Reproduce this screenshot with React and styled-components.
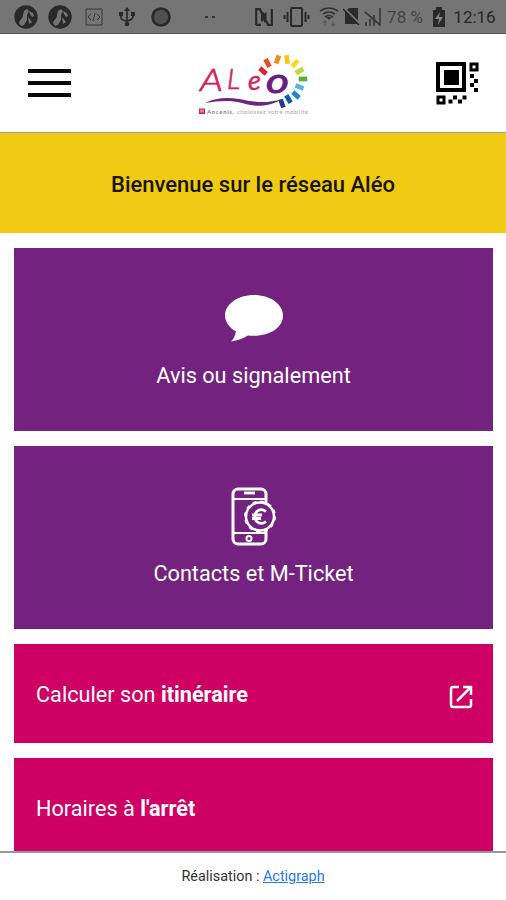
import React from "react";
import styled, { createGlobalStyle } from "styled-components";

const rays = [
  { x: 73, y: 25, angle: -48, color: "#d9232e" },
  { x: 77.5, y: 17, angle: -28, color: "#ea4b20" },
  { x: 87.5, y: 13.5, angle: 20, color: "#f58a1f" },
  { x: 97, y: 13.5, angle: -8, color: "#f9c51a" },
  { x: 105, y: 17.5, angle: 43, color: "#f3dc24" },
  { x: 109.5, y: 25, angle: 60, color: "#c3d72e" },
  { x: 113, y: 33, angle: 88, color: "#55b13c" },
  { x: 109.5, y: 41, angle: 112, color: "#55b5e5" },
  { x: 106, y: 49, angle: 132, color: "#168bd0" },
  { x: 98.5, y: 53, angle: 150, color: "#135bae" },
  { x: 92, y: 57.5, angle: 160, color: "#263b91" },
];

const AppIcon = () => (
  <svg width="24" height="24" viewBox="0 0 24 24">
    <circle cx="12" cy="12" r="11.7" fill="#292929" />
    <path
      d="M5 18c1-4 4-4 4-8l1-4 3-2 2 2-2 4v5l-3 5-3 1zM15 6l4 2 1 3-2 1-2-3zM14 12l4 5-3 2z"
      fill="#747474"
    />
  </svg>
);

const Logo = () => (
  <LogoSvg width="130" height="75" viewBox="0 0 130 75">
    <g fontFamily="Lato, sans-serif" fill="#d71e5c" stroke="#d71e5c" strokeWidth=".3">
      <text x="10" y="45" fontSize="31" fontStyle="italic" fontWeight="300" strokeWidth=".7" textLength="23" lengthAdjust="spacingAndGlyphs">
        A
      </text>
      <text x="37" y="43" fontSize="28" fontStyle="italic" fontWeight="300" strokeWidth=".7">
        L
      </text>
      <text x="58" y="44" fontSize="27" fontStyle="italic" strokeWidth=".4">
        e
      </text>
      <text x="76" y="47" fontSize="34" fontStyle="italic" textLength="23" lengthAdjust="spacingAndGlyphs" fill="#6b1e80" stroke="#6b1e80" strokeWidth=".9">
        o
      </text>
    </g>
    <path
      d="M15 57c10-5 21-6 34-4 15 3 27 5 43 0-11 7-24 9-40 4-13-3-23-2-37 0z"
      fill="#6b2685"
    />
    {rays.map((ray) => (
      <rect
        key={ray.color}
        x="-2.4"
        y="-4.3"
        width="4.8"
        height="8.6"
        fill={ray.color}
        transform={`translate(${ray.x} ${ray.y}) rotate(${ray.angle})`}
      />
    ))}
    <rect x="9" y="62.5" width="6" height="5.5" fill="#d71e5c" />
    <path d="M11 63.5v3m2-3v3" stroke="#fff" strokeWidth=".8" />
    <text x="17" y="67.5" fontFamily="Lato, sans-serif" fontSize="6" fontWeight="700" fill="#9c7890" textLength="27">
      Ancenis,
    </text>
    <text x="47" y="67.5" fontFamily="Lato, sans-serif" fontSize="6" fill="#b6a1b2" textLength="71">
      choisissez votre mobilité
    </text>
  </LogoSvg>
);

const QrIcon = () => (
  <svg width="43" height="43" viewBox="0 0 43 43">
    <g fill="none" stroke="#000">
      <path d="M2 2h26v26H2z" strokeWidth="4" />
      <path d="M35 2h6v6h-6zM2 35h6v6H2z" strokeWidth="3" />
    </g>
    <path
      d="M8 8h15v15H8zM34 12h4v4h-4zM38 17h4v4h-4zM34 21h4v4h-4zM38 26h4v4h-4zM12.5 37.5h4v4h-4zM17 33.5h4v4h-4zM22 37.5h4v4h-4zM26.5 33.5h4v4h-4z"
      fill="#000"
    />
  </svg>
);

const PhoneIcon = () => (
  <svg width="46" height="59" viewBox="0 0 46 59" fill="none" stroke="#fff">
    <rect x="2" y="2" width="33" height="55" rx="5" strokeWidth="3" />
    <path d="M3 12h32M3 46h32" strokeWidth="2" />
    <path d="M13 6h11" strokeWidth="2.8" />
    <circle cx="18" cy="51.5" r="2.5" strokeWidth="2" />
    <circle cx="29" cy="29.5" r="14" fill="#73237f" strokeWidth="2.5" />
    <circle cx="29" cy="29.5" r="15" strokeWidth="2" strokeDasharray="3.9 3.95" />
    <path d="M35 24.5c-5-4-11-1-11 5s6 9 11 5M21 28h10m-10 3.5h9" strokeWidth="2.8" />
  </svg>
);

const App = () => {
  return (
    <Page>
      <GlobalStyle />
      <StatusBar>
        <Slot $w={24}>
          <AppIcon />
        </Slot>
        <Slot $w={24} $gap={10}>
          <AppIcon />
        </Slot>
        <Slot $w={18} $gap={13}>
          <svg width="18" height="18" viewBox="0 0 18 18" fill="none" stroke="#383838">
            <path d="M1 1h16v16H1z" />
            <path d="m6 6-3 3 3 3m6-6 3 3-3 3m-2-7-2 8" />
          </svg>
        </Slot>
        <Slot $w={16} $gap={16}>
          <svg width="16" height="20" viewBox="0 0 16 20" fill="none" stroke="#292929" strokeWidth="1.6">
            <path d="M8 2v15M2 7v4q0 2 6 3 6-1 6-5V6" />
            <path d="m8 0-3 4h6zM0 5h4v4H0zM12 5h4v4h-4z" fill="#292929" stroke="none" />
            <circle cx="8" cy="17" r="2.3" fill="#292929" stroke="none" />
          </svg>
        </Slot>
        <Slot $w={20} $gap={16}>
          <svg width="20" height="20" viewBox="0 0 20 20">
            <circle cx="10" cy="10" r="8.5" fill="#505050" stroke="#292929" strokeWidth="2.6" />
          </svg>
        </Slot>
        <Slot $w={12} $gap={33}>
          <svg width="12" height="4" viewBox="0 0 12 4" fill="#343434">
            <path d="M1 1h3v2H1zM8 1h3v2H8z" />
          </svg>
        </Slot>
        <Slot $w={18} $gap={39}>
          <svg width="18" height="18" viewBox="0 0 18 18" fill="none" stroke="#292929" strokeWidth="2.2">
            <path d="M1.2 17V1.2H5L10.500 14V4.500M16.800 1v15.800H13L7 4v9.500M1.200 16.800H6" />
          </svg>
        </Slot>
        <Slot $w={27} $gap={10}>
          <svg width="27" height="20" viewBox="0 0 27 20" fill="none" stroke="#292929" strokeWidth="2">
            <rect x="8" y="1" width="11" height="18" rx="1" />
            <path d="M4.5 5v10M1.5 8v4M22.5 5v10M25.5 8v4" />
          </svg>
        </Slot>
        <Slot $w={20} $gap={9}>
          <svg width="20" height="20" viewBox="0 0 20 20" fill="none" stroke="#303030" strokeWidth="1.7">
            <path d="M1 4q9-6 18 0M4 7q6-4 12 0M6 10q4-3 8 0" />
            <path d="m7 10 3 3 3-3z" fill="#303030" stroke="none" />
            <path d="M6 14v5m-2-3 2-2 2 2M14 14v5m-2-2 2 2 2-2" stroke="#5b5b5b" strokeWidth="1.3" />
          </svg>
        </Slot>
        <Slot $w={17} $gap={4}>
          <svg width="17" height="19" viewBox="0 0 17 19">
            <path d="M6 1h9v16H2V5z" fill="#292929" />
            <path d="m1 1 16 16" stroke="#757575" strokeWidth="2" />
            <path d="m0 2 16 16" stroke="#292929" strokeWidth="1.5" />
          </svg>
        </Slot>
        <Slot $w={18} $gap={4}>
          <svg width="18" height="19" viewBox="0 0 18 19" stroke="#3c3c3c" strokeWidth="1.8">
            <path d="M2 15v4M6 12v7M10 8v11M16 1v18M1 5l15 13" />
          </svg>
        </Slot>
        <StatusText $w={36} $gap={5} $color="#434343">
          78 %
        </StatusText>
        <Slot $w={14} $gap={9}>
          <svg width="14" height="20" viewBox="0 0 14 20">
            <path d="M4 0h6v3h3v17H1V3h3z" fill="#292929" />
            <path d="m8 5-5 7h4l-1 6 5-8H7z" fill="#858585" />
          </svg>
        </Slot>
        <StatusText $w={43} $gap={7} $color="#262626">
          12:16
        </StatusText>
      </StatusBar>

      <Header>
        <MenuButton aria-label="Menu">
          <span />
          <span />
          <span />
        </MenuButton>
        <Logo />
        <QrIcon />
      </Header>

      <Welcome>Bienvenue sur le réseau Aléo</Welcome>

      <Content>
        <Tile>
          <TileIcon>
            <svg width="60" height="47" viewBox="0 0 60 47">
              <path
                d="M30 0C14 0 1 9 1 20.500c0 6 4 12 11 16-1 4-2 7-5 10 7-1 12-3 17-6 20 2 35-7 35-20C59 9 46 0 30 0z"
                fill="#fff"
              />
            </svg>
          </TileIcon>
          <TileLabel>Avis ou signalement</TileLabel>
        </Tile>
        <Tile>
          <TileIcon>
            <PhoneIcon />
          </TileIcon>
          <TileLabel>Contacts et M-Ticket</TileLabel>
        </Tile>
        <LinkRow>
          <span>
            Calculer son <b>itinéraire</b>
          </span>
          <OpenIcon width="24" height="24" viewBox="0 0 24 24" fill="none" stroke="#fff" strokeWidth="2.5">
            <path d="M10 2H4Q2 2 2 4v16q0 2 2 2h16q2 0 2-2v-6" />
            <path d="M14 2h8v8M22 2 8 16" />
          </OpenIcon>
        </LinkRow>
        <LinkRow>
          <span>
            Horaires à <b>l'arrêt</b>
          </span>
        </LinkRow>
      </Content>

      <Footer>
        Réalisation : <a href="#actigraph">Actigraph</a>
      </Footer>
    </Page>
  );
};

const GlobalStyle = createGlobalStyle`
  * {
    box-sizing: border-box;
  }
  body {
    margin: 0;
    overflow: hidden;
    background: #fff;
    font-family: Roboto, sans-serif;
  }
`;

const Page = styled.div`
  display: flex;
  flex-direction: column;
  width: 506px;
  height: 900px;
  overflow: hidden;
`;

const StatusBar = styled.div`
  display: flex;
  flex-shrink: 0;
  align-items: center;
  height: 34px;
  padding-left: 14px;
  background: #757575;
  border-bottom: 1px solid #555;
`;

const Slot = styled.div`
  display: flex;
  flex: none;
  justify-content: center;
  width: ${({ $w }) => $w}px;
  margin-left: ${({ $gap }) => $gap || 0}px;
`;

const StatusText = styled(Slot)`
  color: ${({ $color }) => $color};
  font-size: 17px;
  white-space: nowrap;
`;

const Header = styled.header`
  display: flex;
  flex-shrink: 0;
  align-items: center;
  justify-content: space-between;
  height: 99px;
  padding: 0 27px 0 28px;
  border-bottom: 1px solid #a6a08a;
`;

const LogoSvg = styled.svg`
  margin-left: 3px;
`;

const MenuButton = styled.button`
  display: flex;
  flex-direction: column;
  gap: 8px;
  width: 43px;
  padding: 0;
  border: 0;
  background: none;

  span {
    height: 4px;
    background: #080808;
  }
`;

const Welcome = styled.div`
  flex-shrink: 0;
  height: 100px;
  padding-top: 39px;
  background: #f1cb13;
  color: #171500;
  font-size: 22px;
  font-weight: 500;
  line-height: 26px;
  text-align: center;
`;

const Content = styled.main`
  display: flex;
  flex: 1;
  flex-direction: column;
  gap: 15px;
  min-height: 0;
  padding: 15px 13px 0 14px;
  overflow: hidden;
`;

const Tile = styled.div`
  display: flex;
  flex: none;
  flex-direction: column;
  align-items: center;
  height: 183px;
  padding-top: 38px;
  background: #73237f;
`;

const TileIcon = styled.div`
  display: flex;
  align-items: center;
  height: 64px;
`;

const TileLabel = styled.div`
  margin-top: 12px;
  color: #fff;
  font-size: 21.7px;
  line-height: 28px;
`;

const LinkRow = styled.div`
  display: flex;
  flex: none;
  align-items: center;
  justify-content: space-between;
  height: 99px;
  padding: 1px 20px 0 22px;
  background: #cf0063;
  color: #fff;
  font-size: 21.7px;

  b {
    font-weight: 700;
  }
`;

const OpenIcon = styled.svg`
  margin-top: 6px;
`;

const Footer = styled.footer`
  flex-shrink: 0;
  height: 49px;
  padding-top: 14px;
  border-top: 2px solid #999;
  background: #fff;
  color: #333;
  font-size: 14.4px;
  line-height: 20px;
  text-align: center;

  a {
    color: #2478f0;
  }
`;

export default App;
